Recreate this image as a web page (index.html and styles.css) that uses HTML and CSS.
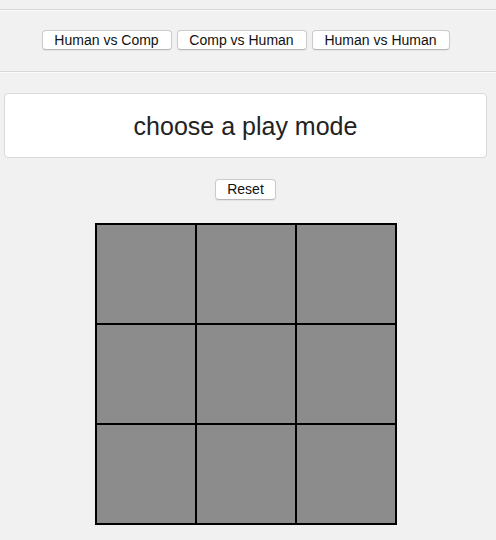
FILE: index.html
```html
<!DOCTYPE html>
<html>
<head>
<meta charset="utf-8">
<link rel="stylesheet" href="styles.css">
</head>
<body>
<div class="page">
  <div class="rule rule-top"></div>
  <div class="modes">
    <button class="btn mode">Human vs Comp</button>
    <button class="btn mode">Comp vs Human</button>
    <button class="btn mode wide">Human vs Human</button>
  </div>
  <div class="rule rule-mid"></div>
  <div class="message">choose a play mode</div>
  <div class="reset-row"><button class="btn reset">Reset</button></div>
  <div class="board">
    <div class="cell"></div><div class="cell"></div><div class="cell"></div>
    <div class="cell"></div><div class="cell"></div><div class="cell"></div>
    <div class="cell"></div><div class="cell"></div><div class="cell"></div>
  </div>
</div>
</body>
</html>
```
FILE: styles.css
```css
html, body {
  margin: 0;
  padding: 0;
  background: #f1f1f1;
  font-family: "Liberation Sans", Arial, sans-serif;
  color: #1e1e1e;
}
.page {
  width: 491px;
  display: flex;
  flex-direction: column;
  align-items: center;
}
.rule {
  width: 496px;
  align-self: flex-start;
  height: 0;
  border-top: 1px solid #d7d7d7;
  border-bottom: 1px solid #fafafa;
}
.rule-top { margin-top: 9px; }
.rule-mid { margin-top: 21px; }
.modes {
  margin-top: 19px;
  display: flex;
  gap: 5px;
}
.btn {
  font-family: "Liberation Sans", Arial, sans-serif;
  font-size: 14px;
  color: #111;
  background: #fff;
  border: 1px solid #cbcbcb;
  border-bottom-color: #b8b8b8;
  border-radius: 4px;
  box-shadow: 0 1px 1px rgba(0,0,0,0.06);
  padding: 0;
  margin: 0;
  height: 20px;
  line-height: 18px;
}
.mode { width: 130px; }
.mode.wide { width: 138px; }
.message {
  margin-top: 20px;
  margin-left: 4px;
  align-self: flex-start;
  width: 481px;
  height: 63px;
  background: #fff;
  border: 1px solid #dadada;
  border-radius: 4px;
  display: flex;
  align-items: center;
  justify-content: center;
  font-size: 25px;
  padding-top: 1px;
  box-sizing: content-box;
  height: 62px;
  color: #222;
}
.reset-row {
  margin-top: 21px;
  display: flex;
  justify-content: center;
}
.reset {
  width: 61px;
  height: 21px;
  line-height: 19px;
}
.board {
  margin-top: 23px;
  display: grid;
  grid-template-columns: repeat(3, 100px);
  grid-template-rows: repeat(3, 100px);
  border: 1px solid #000;
}
.cell {
  background: #8c8c8c;
  border: 1px solid #000;
}
```
